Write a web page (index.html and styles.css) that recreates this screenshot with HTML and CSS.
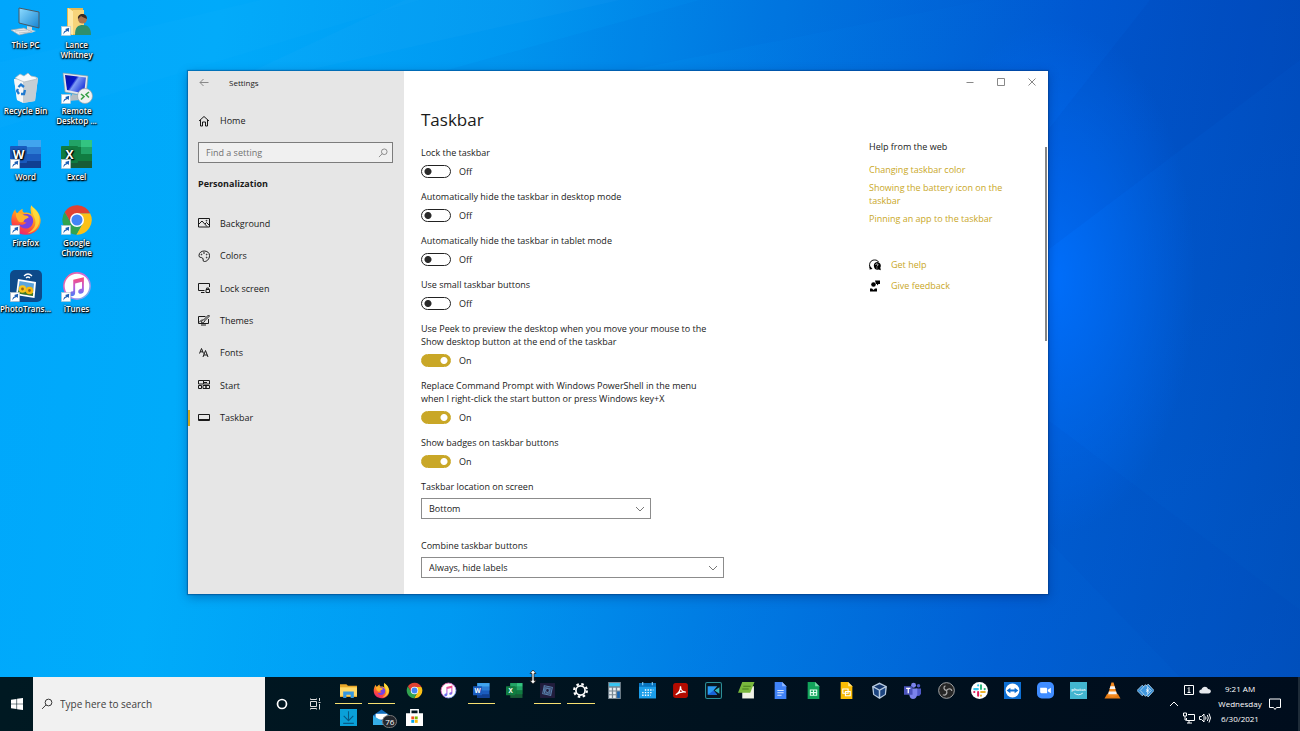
FILE: index.html
```html
<!DOCTYPE html>
<html lang="en">
<head>
<meta charset="utf-8">
<meta name="viewport" content="width=device-width, initial-scale=1">
<title>Settings - Taskbar</title>
<link rel="stylesheet" href="styles.css">
</head>
<body>
<svg class="defs" aria-hidden="true">
  <defs>
    <linearGradient id="g-screen" x1="0" y1="0" x2="1" y2="1"><stop offset="0" stop-color="#8fdcff"/><stop offset="1" stop-color="#1584d2"/></linearGradient>
    <linearGradient id="g-rdp" x1="0" y1="0" x2="1" y2="0.6"><stop offset="0" stop-color="#0a12a0"/><stop offset="0.45" stop-color="#0716c8"/><stop offset="0.55" stop-color="#7f9cf5"/><stop offset="1" stop-color="#1a34d8"/></linearGradient>
    <linearGradient id="g-fox" x1="0.8" y1="0" x2="0.3" y2="1"><stop offset="0" stop-color="#ffe23a"/><stop offset="0.45" stop-color="#ff9a1f"/><stop offset="0.75" stop-color="#ff4a3c"/><stop offset="1" stop-color="#e8227a"/></linearGradient>
    <linearGradient id="g-note" x1="0" y1="0" x2="0" y2="1"><stop offset="0" stop-color="#ff4a6e"/><stop offset="0.5" stop-color="#c25ad8"/><stop offset="1" stop-color="#4a7cf5"/></linearGradient>
    <linearGradient id="g-ring" x1="0" y1="0" x2="1" y2="1"><stop offset="0" stop-color="#ff5f87"/><stop offset="0.5" stop-color="#c86be8"/><stop offset="1" stop-color="#5cc4f5"/></linearGradient>
    <symbol id="arrow" viewBox="0 0 10 10"><rect x="0.5" y="0.5" width="9" height="9" fill="#fff" stroke="#b8c4cc" stroke-width="0.6"/><path d="M2.500 8.500C2.300 6 3.400 4.700 5.200 4.300L4.200 3 8.200 1.700 7.800 6 6.600 5.100C4.800 5.600 3.600 6.400 2.500 8.500z" fill="#1c5fb4"/></symbol>
    <symbol id="word" viewBox="0 0 32 32"><path d="M8 2h23v28H8z" fill="#1b5cbe"/><path d="M8 2h23v7H8z" fill="#41a5ee"/><path d="M8 9h23v7H8z" fill="#2b7cd3"/><path d="M8 23h23v7H8z" fill="#103f91"/><rect x="0" y="8" width="17" height="17" rx="1" fill="#185abd"/><text x="8.500" y="21" text-anchor="middle" class="app-letter">W</text></symbol>
    <symbol id="excel" viewBox="0 0 32 32"><path d="M8 2h23v28H8z" fill="#185c37"/><path d="M8 2h12v7H8z" fill="#21a366"/><path d="M20 2h11v7H20z" fill="#33c481"/><path d="M8 9h12v14H8z" fill="#107c41"/><path d="M20 9h11v7H20z" fill="#21a366"/><path d="M20 16h11v7H20z" fill="#107c41"/><rect x="0" y="8" width="17" height="17" rx="1" fill="#107c41"/><text x="8.500" y="21" text-anchor="middle" class="app-letter">X</text></symbol>
    <symbol id="firefox" viewBox="0 0 48 48"><path d="M24 46C11 46 2 37 2 25 2 18 4 13 8 8c0 3 1 5 3 6 2-3 4-5 8-7-1 3 0 5 3 6 4-1 8 0 10 3-1-6-2-10 0-14 3 5 13 9 14 22 0 13-9 22-22 22z" fill="url(#g-fox)"/><path d="M14 20c3-5 11-7 17-3 5 4 5 13 0 17-6 5-15 3-18-4 4 2 8 1 12-2-6 0-6-5-11-8z" fill="#7542e5"/><path d="M9 14c3-1 8-1 12 3 3 0 7 1 7 3-1 2-6 2-7 5-2 3-7 3-9 0-2-4-4-7-3-11z" fill="#ffb32a"/><path d="M34 5c8 6 11 14 10 22-2 10-9 16-18 17 9-5 13-11 12-19-1-6-6-11-4-20z" fill="#ffe43f" opacity="0.75"/></symbol>
    <symbol id="chrome" viewBox="0 0 48 48"><path d="M24 14H43.600A22 22 0 0 1 22.860 45.970L32.660 29z" fill="#fbc116"/><path d="M32.660 29L22.860 45.970A22 22 0 0 1 5.540 12.030L15.340 29z" fill="#31a350"/><path d="M15.340 29L5.540 12.030A22 22 0 0 1 43.600 14H24z" fill="#df4232"/><circle cx="24" cy="24" r="10.500" fill="#fff"/><circle cx="24" cy="24" r="8.300" fill="#4285f4"/></symbol>
    <symbol id="itunes" viewBox="0 0 48 48"><circle cx="24" cy="24" r="21" fill="#fff" stroke="url(#g-ring)" stroke-width="2.500"/><path d="M18 14l17-4v21c0 6-9 7-9 2 0-4 4-4 6-5V17l-11 3v15c0 6-9 7-9 2 0-4 4-4 6-5z" fill="url(#g-note)"/></symbol>
    <symbol id="lens" viewBox="0 0 16 16"><g fill="none" stroke="currentColor" stroke-width="1.300"><circle cx="10" cy="6" r="4.500"/><path d="M6.700 9.200L1.500 14.500"/></g></symbol>
  </defs>
</svg>

<div class="screen">
  <main class="desktop">
    <svg class="beams" viewBox="0 0 1300 677" preserveAspectRatio="none" aria-hidden="true">
      <path d="M250 72L405 0H620L300 72z" fill="#5fc8ff" opacity="0.05"/>
      <path d="M0 62L260 0H420L0 128z" fill="#30b8ff" opacity="0.06"/>
      <path d="M620 72L985 0H700L440 72z" fill="#0052d0" opacity="0.06"/>
      <path d="M1048 250L1300 60V0H1150L1048 130z" fill="#002c90" opacity="0.05"/>
      <path d="M1048 420L1300 610V677H1180L1048 540z" fill="#0038a8" opacity="0.05"/>
    </svg>

    <nav class="shortcuts" aria-label="Desktop">
      <a class="shortcut" href="#"><svg viewBox="0 0 32 32"><path d="M9 2l20 4v16L9 17z" fill="url(#g-screen)" stroke="#4a5964" stroke-width="1"/><path d="M17 20l5 1v3l4 1-5 2-8-2 4-1z" fill="#cfd6da"/><path d="M1 24l13-2 8 4-13 3z" fill="#e7eaec" stroke="#98a4ac" stroke-width="0.700"/><path d="M5 25l12-1M9 27l10-1" stroke="#a9b4bb" stroke-width="0.700"/></svg><span>This PC</span></a>
      <a class="shortcut" href="#"><svg viewBox="0 0 32 32"><path d="M6 2h16v27H6z" fill="#e6b84e"/><path d="M7 2l5 3v24l-5-2z" fill="#ffe9a6"/><path d="M12 4h11v24H12z" fill="#f7d47a"/><circle cx="21.500" cy="13" r="4.500" fill="#a9744e"/><path d="M17 13c-1-6 9-7 9 0-2-1-5-2-6-3-1 1-2 2-3 3z" fill="#3a2c24"/><path d="M14 29c0-8 3-10 8-10s8 3 8 10z" fill="#2f8f6b"/><use href="#arrow" x="0" y="20" width="10" height="10"/></svg><span>Lance Whitney</span></a>
      <a class="shortcut" href="#"><svg viewBox="0 0 32 32"><path d="M4 7l22-2 2 1-3 23-12 2-6-3z" fill="#dbe1e5"/><path d="M4 7l9 2 1 22-7-3z" fill="#f5f7f8"/><path d="M13 9l15-3-3 23-12 2z" fill="#c6ced4"/><path d="M5 6l5-4 4 2 4-3 3 3 5 1 1 2-13 3z" fill="#f8fafb" stroke="#aab5bc" stroke-width="0.700"/><g fill="none" stroke="#1f7ad0" stroke-width="2.300"><path d="M8.500 15l2.500-2.500 3 2.500M15 18l-1 4h-3M9 22l-2-3 1-2"/></g></svg><span>Recycle Bin</span></a>
      <a class="shortcut" href="#"><svg viewBox="0 0 32 32"><path d="M2 1l25 3-2 20-21-4z" fill="#e4e8eb" stroke="#8b979f" stroke-width="0.600"/><path d="M4 3l21 2.500-2 16L6 18z" fill="url(#g-rdp)"/><path d="M11 22l7 1 1 5-11 1z" fill="#b4bdc4"/><circle cx="24" cy="24" r="7.500" fill="#f1f2f2" stroke="#9aa2a7" stroke-width="0.700"/><path d="M20 22l3 2.500-3 3M28 20l-3 2.500 3 3" fill="none" stroke="#3aa14a" stroke-width="1.600"/><use href="#arrow" x="0" y="22" width="10" height="10"/></svg><span>Remote Desktop ...</span></a>
      <a class="shortcut" href="#"><svg viewBox="0 0 32 32"><use href="#word" width="32" height="32"/><use href="#arrow" x="0" y="21" width="10" height="10"/></svg><span>Word</span></a>
      <a class="shortcut" href="#"><svg viewBox="0 0 32 32"><use href="#excel" width="32" height="32"/><use href="#arrow" x="0" y="21" width="10" height="10"/></svg><span>Excel</span></a>
      <a class="shortcut" href="#"><svg viewBox="0 0 32 32"><use href="#firefox" width="32" height="32"/><use href="#arrow" x="0" y="21" width="10" height="10"/></svg><span>Firefox</span></a>
      <a class="shortcut" href="#"><svg viewBox="0 0 32 32"><use href="#chrome" width="32" height="32"/><use href="#arrow" x="0" y="21" width="10" height="10"/></svg><span>Google Chrome</span></a>
      <a class="shortcut" href="#"><svg viewBox="0 0 32 32"><rect width="32" height="32" rx="5" fill="#0d4a8a"/><path d="M14 6q4-4 8 0M16 8q2-2 4 0" fill="none" stroke="#fff" stroke-width="1.300"/><path d="M8 9l18 3-1.500 16L6 25z" fill="#fff"/><path d="M9.500 11l14.500 2.500-1.200 12.500L7.800 23.500z" fill="#5aa4dc"/><path d="M8.200 20.500l15 2.500-.3 3-15-2.500z" fill="#3f7a25"/><circle cx="12.500" cy="19" r="3.800" fill="#f8c51c"/><circle cx="19.500" cy="20.500" r="3.800" fill="#f5b90f"/><circle cx="12.500" cy="19" r="1.400" fill="#9a6414"/><circle cx="19.500" cy="20.500" r="1.400" fill="#9a6414"/><use href="#arrow" x="0" y="22" width="10" height="10"/></svg><span>PhotoTrans...</span></a>
      <a class="shortcut" href="#"><svg viewBox="0 0 32 32"><use href="#itunes" x="1" width="30" height="32"/><use href="#arrow" x="0" y="22" width="10" height="10"/></svg><span>iTunes</span></a>
    </nav>

    <section class="window" aria-label="Settings">
      <aside class="sidebar">
        <header class="titlebar">
          <button class="icon-button" aria-label="Back"><svg class="glyph" viewBox="0 0 12 12"><path d="M10.500 5.500H2M5.500 2L2 5.500 5.500 9"/></svg></button>
          <span>Settings</span>
        </header>
        <a class="nav-item home" href="#"><svg class="glyph" viewBox="0 0 12 12"><path d="M1 6l5-4.500L11 6M2.500 5v6h2V7h3v4h2V5"/></svg>Home</a>
        <form class="find">
          <input type="search" placeholder="Find a setting" aria-label="Find a setting">
          <svg class="find-lens"><use href="#lens"/></svg>
        </form>
        <h2>Personalization</h2>
        <nav class="nav" aria-label="Personalization">
          <a class="nav-item" href="#"><svg class="glyph" viewBox="0 0 12 12"><path d="M.5 1.500h11v8.500H.5zM1 7l3-3 5 5.500M7 7l1.500-1.500 3 3"/><circle cx="8.500" cy="3.700" r=".4"/></svg>Background</a>
          <a class="nav-item" href="#"><svg class="glyph" viewBox="0 0 12 12"><path d="M1 5.500c0-6 10.500-6 10.500 0 0 4-3 6-5 6-2.500 0-.5-2.500-2-3.500C3 7 1 8 1 5.500z"/><circle cx="3.500" cy="4.500" r=".4"/><circle cx="6" cy="3" r=".4"/><circle cx="8.700" cy="4.500" r=".4"/><circle cx="8.700" cy="7.500" r=".4"/></svg>Colors</a>
          <a class="nav-item" href="#"><svg class="glyph" viewBox="0 0 12 12"><path d="M6.500 8.500H.5v-7h11v3.500M3 10.500h3.500M8 7.500h3.500v3H8zM8.700 7.500V6h2v1.500"/></svg>Lock screen</a>
          <a class="nav-item" href="#"><svg class="glyph" viewBox="0 0 12 12"><path d="M7.500 2.500H.5v7h10V5M3.500 8.500c0-2 1-2.500 2-2.500L10.500 1l1 1-5 5C6.500 8.500 5 9 3.500 8.500zM3 11h5M1 8.500l3-3"/></svg>Themes</a>
          <a class="nav-item" href="#"><svg class="glyph" viewBox="0 0 12 12"><path d="M1.500 6.500l2-5 2 5M2.200 4.800h2.600M5 10l2.500-6.500L10 10M5.800 8h3.400"/></svg>Fonts</a>
          <a class="nav-item" href="#"><svg class="glyph" viewBox="0 0 12 12"><path d="M.5 1.500h5v3.500h-5zM5.500 1.500h6V5h-6zM.5 6.500h3v3h-3zM5 6.500h3v3H5zM8 6.500h3.500v3H8zM5 3.500h4"/></svg>Start</a>
          <a class="nav-item current" href="#" aria-current="page"><svg class="glyph" viewBox="0 0 12 12"><path d="M.5 2.500h11v6H.5zM.5 7.500h11"/></svg>Taskbar</a>
        </nav>
      </aside>

      <div class="content">
        <div class="window-controls">
          <button class="icon-button" aria-label="Minimize"><svg class="glyph" viewBox="0 0 8 8"><path d="M.5 4.500h7"/></svg></button>
          <button class="icon-button" aria-label="Maximize"><svg class="glyph" viewBox="0 0 8 8"><path d="M.5.500h7v7h-7z"/></svg></button>
          <button class="icon-button" aria-label="Close"><svg class="glyph" viewBox="0 0 8 8"><path d="M.5.500l7 7M7.500.500l-7 7"/></svg></button>
        </div>
        <div class="page">
          <form class="settings">
            <h1>Taskbar</h1>
            <div class="setting"><label for="lock">Lock the taskbar</label><div class="switch"><input type="checkbox" role="switch" id="lock"><span>Off</span></div></div>
            <div class="setting"><label for="hide-d">Automatically hide the taskbar in desktop mode</label><div class="switch"><input type="checkbox" role="switch" id="hide-d"><span>Off</span></div></div>
            <div class="setting"><label for="hide-t">Automatically hide the taskbar in tablet mode</label><div class="switch"><input type="checkbox" role="switch" id="hide-t"><span>Off</span></div></div>
            <div class="setting"><label for="small">Use small taskbar buttons</label><div class="switch"><input type="checkbox" role="switch" id="small"><span>Off</span></div></div>
            <div class="setting"><label for="peek">Use Peek to preview the desktop when you move your mouse to the Show desktop button at the end of the taskbar</label><div class="switch"><input type="checkbox" role="switch" id="peek" checked><span>On</span></div></div>
            <div class="setting"><label for="shell">Replace Command Prompt with Windows PowerShell in the menu when I right-click the start button or press Windows key+X</label><div class="switch"><input type="checkbox" role="switch" id="shell" checked><span>On</span></div></div>
            <div class="setting"><label for="badges">Show badges on taskbar buttons</label><div class="switch"><input type="checkbox" role="switch" id="badges" checked><span>On</span></div></div>
            <div class="setting choice"><label for="location">Taskbar location on screen</label><div class="select short"><select id="location"><option>Bottom</option></select><svg class="glyph" viewBox="0 0 10 10"><path d="M1 3l4 4 4-4"/></svg></div></div>
            <div class="setting choice"><label for="combine">Combine taskbar buttons</label><div class="select"><select id="combine"><option>Always, hide labels</option></select><svg class="glyph" viewBox="0 0 10 10"><path d="M1 3l4 4 4-4"/></svg></div></div>
          </form>
          <aside class="help">
            <h3>Help from the web</h3>
            <a href="#">Changing taskbar color</a>
            <a href="#">Showing the battery icon on the taskbar</a>
            <a href="#">Pinning an app to the taskbar</a>
            <div class="support">
              <a href="#"><svg viewBox="0 0 12 12"><path d="M1 9C-.5 4 2 1 5.500 1c2 0 3 .5 4 2" fill="none" stroke="#000"/><path d="M.5 10.500L1 7l2.500 3z"/><path d="M8 3a3.700 3.700 0 0 1 3.300 5.500l.5 2.700-2.300-.6A3.800 3.800 0 1 1 8 3z"/><path d="M6.700 6c0-1.700 2.500-1.500 2.300 0-.1.700-1 .8-1.100 1.500M7.900 8.500v1" stroke="#fff" fill="none" stroke-width=".8"/></svg>Get help</a>
              <a href="#"><svg viewBox="0 0 12 12"><circle cx="4.500" cy="4.500" r="2.300"/><path d="M1 11.500V8.500h2l1.500 1.500L6 8.500h2v3zM6 .5h5V4H9.500L8 5.500V4H7z"/></svg>Give feedback</a>
            </div>
          </aside>
          <div class="scroll-track"><div class="scroll-thumb"></div></div>
        </div>
      </div>
    </section>
    <svg class="cursor" viewBox="0 0 8 16" aria-hidden="true"><path d="M4 1L1 4.500h2v7H1L4 15l3-3.500H5v-7h2z" fill="#fff" stroke="#222" stroke-width=".8"/></svg>
  </main>

  <footer class="taskbar">
    <button class="start" aria-label="Start"><svg viewBox="0 0 12 12"><path d="M0 1.700l5.500-.8v4.800H0zM6.100.8L12 0v5.700H6.100zM0 6.300h5.500v4.800L0 10.300zM6.100 6.300H12V12l-5.900-.8z" fill="#fff"/></svg></button>
    <label class="search"><svg><use href="#lens"/></svg><input type="text" placeholder="Type here to search" aria-label="Type here to search"></label>
    <button class="tool" aria-label="Cortana"><svg viewBox="0 0 12 12"><circle cx="6" cy="6" r="4.500" fill="none" stroke="#fff" stroke-width="1.700"/></svg></button>
    <button class="tool" aria-label="Task View"><svg class="glyph" viewBox="0 0 12 12"><path d="M1.500 3.500h6v5h-6zM1.500.500V1.500h6V.500M1.500 11.500v-1h6v1M10.500 0v3M10.500 6v5.500M9.500 4.500h2"/></svg></button>
    <nav class="apps" aria-label="Open apps">
      <a href="#" class="open" aria-label="File Explorer"><svg viewBox="0 0 16 16"><path d="M0 2h6l1.500 1.500H16V14H0z" fill="#e9a829"/><path d="M0 5h16v8H0z" fill="#ffd968"/><path d="M3 9h10v6h-3v-3H6v3H3z" fill="#3597e0"/></svg></a>
      <a href="#" class="open" aria-label="Firefox"><svg><use href="#firefox"/></svg></a>
      <a href="#" aria-label="Chrome"><svg><use href="#chrome"/></svg></a>
      <a href="#" aria-label="iTunes"><svg><use href="#itunes"/></svg></a>
      <a href="#" class="open" aria-label="Word"><svg><use href="#word"/></svg></a>
      <a href="#" aria-label="Excel"><svg><use href="#excel"/></svg></a>
      <a href="#" class="open" aria-label="Photoshop Elements"><svg viewBox="0 0 16 16"><rect x="1" y="1" width="14" height="14" fill="#211c3c"/><g fill="none" stroke="#5a82ae" stroke-width="1"><path d="M5 3.500l7.500 1.500-1.500 7.500L3.500 11z"/><path d="M5.500 5.500l5 .3-.3 4.800-5-.3z"/><circle cx="8" cy="8" r="1.800"/></g></svg></a>
      <a href="#" class="open" aria-label="Settings"><svg viewBox="0 0 16 16"><circle cx="8" cy="8" r="6" fill="none" stroke="#fff" stroke-width="2" stroke-dasharray="2.360 2.360"/><circle cx="8" cy="8" r="4.300" fill="none" stroke="#fff" stroke-width="1.600"/></svg></a>
      <a href="#" aria-label="Calculator"><svg viewBox="0 0 16 16"><path d="M2 0h12v16H2z" fill="#778793"/><path d="M3 1h10v3H3z" fill="#39c6f2"/><path d="M3 5.500h2.500V8H3zM6.700 5.500h2.500V8H6.700zM10.500 5.500H13V8h-2.500zM3 9h2.500v2.500H3zM6.700 9h2.500v2.500H6.700zM3 12.500h2.500V15H3zM6.700 12.500h2.500V15H6.700z" fill="#e9eef2"/><path d="M10.500 9H13v6h-2.500z" fill="#1565b5"/></svg></a>
      <a href="#" aria-label="Calendar"><svg viewBox="0 0 16 16"><path d="M0 1h16v14.500H0z" fill="#1b9eea"/><path d="M0 1h16v3.500H0z" fill="#0873bd"/><path d="M3.500 0v3M12.500 0v3" stroke="#8dd5ff"/><path d="M5.500 7.500h8M3 10h10M3 12.500h8" stroke="#fff" stroke-width="1.300" stroke-dasharray="1.300 1.200"/></svg></a>
      <a href="#" aria-label="Acrobat"><svg viewBox="0 0 16 16"><rect x="1" y="1" width="14" height="14" rx="2.500" fill="#b30b00"/><path d="M3.500 12c3-1.500 4.500-5 4.500-8M8 4c0 3 2 5.500 5 5.500-4-.5-7 .5-9.500 2.500" fill="none" stroke="#fff" stroke-width="1.200"/></svg></a>
      <a href="#" aria-label="Filmora"><svg viewBox="0 0 16 16"><rect x=".5" y=".5" width="15" height="15" rx="1.500" fill="#07151e" stroke="#2c8f98"/><path d="M2.500 4h9L8 8l3.500 4h-9z" fill="#2a9bf2"/><path d="M2.500 12L8 8l3.500 4z" fill="#1762d8"/><path d="M9 8l4.500-3v6z" fill="#36b8b8"/></svg></a>
      <a href="#" aria-label="LiteManager"><svg viewBox="0 0 16 16"><path d="M4 4h11v11.500H4z" fill="#f1f2e6"/><path d="M4 0h11.500l-4 10H0z" fill="#79b83d"/><path d="M5 4h7M4 6.500h6" stroke="#457d1c"/></svg></a>
      <a href="#" aria-label="Docs"><svg viewBox="0 0 16 16"><path d="M2.500 0h7l4 4v12h-11z" fill="#3f82f7"/><path d="M9.500 0l4 4h-4z" fill="#91b8ff"/><path d="M5 8h6M5 10.200h6M5 12.400h4" stroke="#dbe8ff"/></svg></a>
      <a href="#" aria-label="Sheets"><svg viewBox="0 0 16 16"><path d="M2.500 0h7l4 4v12h-11z" fill="#12a35b"/><path d="M9.500 0l4 4h-4z" fill="#7ad8a8"/><path d="M5 7.500h6v5H5zM5 10h6M8 7.500v5" stroke="#e0ffee" fill="none"/></svg></a>
      <a href="#" aria-label="Slides"><svg viewBox="0 0 16 16"><path d="M2.500 0h7l4 4v12h-11z" fill="#fbbc04"/><path d="M9.500 0l4 4h-4z" fill="#ffe38a"/><path d="M4.500 6.500h5v4h-5zM7 9h4.500v4H7z" stroke="#fff" fill="#f4b400"/></svg></a>
      <a href="#" aria-label="VirtualBox"><svg viewBox="0 0 16 16"><path d="M8 .5L15 4l-1 8-6 4-6-4-1-8z" fill="#b8cbe0"/><path d="M8 2l5 2.200L8 7 3 4.200z" fill="#14366b"/><path d="M2.500 5.500L7.300 8v6L3 11.500zM13.500 5.500L8.700 8v6l4.300-2.500z" fill="#1c447f"/></svg></a>
      <a href="#" aria-label="Teams"><svg viewBox="0 0 16 16"><circle cx="9" cy="3" r="2.300" fill="#7b83eb"/><circle cx="13.700" cy="3.500" r="1.600" fill="#5059c9"/><path d="M11 6h5v5q-1 3-4 2z" fill="#5059c9"/><path d="M5 6h7.500v6q-1 4-4 4T5 12z" fill="#7b83eb"/><rect y="4" width="8" height="8" fill="#4b53bc"/><path d="M2 6h4M4 6v4.500" stroke="#fff" stroke-width="1.200"/></svg></a>
      <a href="#" aria-label="OBS"><svg viewBox="0 0 16 16"><circle cx="8" cy="8" r="7.400" fill="#262626" stroke="#bbb" stroke-width=".8"/><path d="M8 8C5 7.500 5 4.500 7 3.500M8 8c2-2.500 5-1.500 5 .5M8 8c1.200 3-1 5-3.500 4" fill="none" stroke="#aaa" stroke-width="1.200"/></svg></a>
      <a href="#" aria-label="Slack"><svg viewBox="0 0 16 16"><circle cx="8" cy="8" r="8" fill="#fff"/><g fill="none" stroke-width="1.900" stroke-linecap="round"><path d="M6.700 3v.2M3 6.700h3.500" stroke="#36c5f0"/><path d="M9.400 3v3.500M12.800 6.700h.2" stroke="#2eb67d"/><path d="M9.500 9.400H13M9.400 12.800v.2" stroke="#ecb22e"/><path d="M6.700 9.500V13M3 9.400h.2" stroke="#e01e5a"/></g></svg></a>
      <a href="#" aria-label="TeamViewer"><svg viewBox="0 0 16 16"><path d="M0 0h16v16H0z" fill="#0d6fd3"/><circle cx="8" cy="8" r="6.500" fill="#fff"/><path d="M2.500 8L6 5.500V7h4V5.500L13.500 8 10 10.500V9H6v1.500z" fill="#0d6fd3"/></svg></a>
      <a href="#" aria-label="Zoom"><svg viewBox="0 0 16 16"><rect width="16" height="15.500" rx="4.500" fill="#3f8cff"/><path d="M3 5.500h5.500q1 0 1 1v4H4q-1 0-1-1zM10.200 7.200L13 5.500v5l-2.800-1.700z" fill="#fff"/></svg></a>
      <a href="#" aria-label="Amazon Photos"><svg viewBox="0 0 16 16"><path d="M0 0h16v16H0z" fill="#42b5cf"/><text x="8" y="8.500" text-anchor="middle" class="photos">photos</text><path d="M4 10.500q4 3 8 0" fill="none" stroke="#fff" stroke-width=".8"/></svg></a>
      <a href="#" aria-label="VLC"><svg viewBox="0 0 16 16"><path d="M3 11h10l2.500 4.500H.5z" fill="#e57b13"/><path d="M7 .5h2L12.500 13q-4.500 2-9 0z" fill="#f58a1f"/><path d="M6 4h4l.8 2.700H5.200zM4.500 9h7l.6 2.500H3.900z" fill="#f4f4f4"/></svg></a>
      <a href="#" aria-label="Remote tool"><svg viewBox="0 0 16 16"><path d="M0 8l5-5 5 5-5 5zM5 8l5.500-6L16 8l-5.500 6z" fill="#2f8ad5" stroke="#b6d9f2" stroke-width=".8"/><path d="M3 8l5-5.500L13.500 8 8 13.500z" fill="#3f97de" stroke="#c0ddf2" stroke-width=".8"/><path d="M10 5v6M8.500 7l3 2M11.500 7l-3 2" stroke="#fff" stroke-width=".7"/></svg></a>
      <a href="#" aria-label="Downloader"><svg viewBox="0 0 16 16"><path d="M0 0h16v16H0z" fill="#0aa0d8"/><path d="M8 2v8.500M3.500 6.500L8 11l4.500-4.500M3 13.500h10" fill="none" stroke="#075a86"/></svg></a>
      <a href="#" aria-label="Mail, 76 unread"><svg viewBox="0 0 16 16"><path d="M0 6l8-5.500L16 6v9H0z" fill="#0f6cbd"/><path d="M2.500 4.500h11V10h-11z" fill="#fff"/><path d="M0 6l8 5 8-5v9H0z" fill="#35aee8"/></svg><span class="badge">76</span></a>
      <a href="#" aria-label="Store"><svg viewBox="0 0 16 16"><path d="M0 4h16v12H0z" fill="#fff"/><path d="M4.500 5V.700h7V5" fill="none" stroke="#fff" stroke-width="1.300"/><path d="M5 7h2.700v2.700H5z" fill="#f25022"/><path d="M8.300 7H11v2.700H8.300z" fill="#7fba00"/><path d="M5 10.300h2.700V13H5z" fill="#00a4ef"/><path d="M8.300 10.300H11V13H8.300z" fill="#ffb900"/></svg></a>
    </nav>
    <div class="tray">
      <button class="icon-button" aria-label="Show hidden icons"><svg class="glyph" viewBox="0 0 8 8"><path d="M0 6l4-4 4 4"/></svg></button>
      <div class="status">
        <svg class="glyph" viewBox="0 0 12 12"><path d="M1.500 1.500h9v9h-9zM5 4.500l1-1v5M4.500 8.500h3"/></svg>
        <svg viewBox="0 0 12 12"><path d="M2.500 9.500c-3 0-3-4 0-4C3.500 2 8 2 9 5c4 0 3.500 4.500.5 4.500z" fill="#e6e9ed"/></svg>
        <svg class="glyph" viewBox="0 0 12 12"><path d="M5 2.500h6.500v6H3.500V6M6 8.500v2.500M4 11h5M.5 1h3v3h-3zM2 4v4h1.500"/></svg>
        <svg class="glyph" viewBox="0 0 12 12"><path d="M.5 4.500h2L5 2v8L2.500 7.500h-2zM6.500 4.500q1 1.500 0 3M8.300 3q2 3 0 6M10 1.500q3 4.500 0 9"/></svg>
      </div>
      <time class="clock" datetime="2021-06-30T09:21"><span>9:21 AM</span><span>Wednesday</span><span>6/30/2021</span></time>
      <button class="icon-button" aria-label="Notifications"><svg class="glyph note" viewBox="0 0 12 12"><path d="M.5 1h11v8.500h-4l-1.500 2-1.500-2h-4z"/></svg></button>
    </div>
  </footer>
</div>
</body>
</html>
```

FILE: styles.css
```css
* { box-sizing: border-box; }

body {
  margin: 0;
  font-family: "Open Sans", "Noto Sans", sans-serif;
  font-size: 9px;
  line-height: 13px;
  color: #1a1a1a;
}

button, input, select { font: inherit; color: inherit; }
button { border: 0; padding: 0; background: none; }
a { text-decoration: none; color: inherit; }
h1, h2, h3 { margin: 0; font-weight: 400; }

.defs { position: absolute; width: 0; height: 0; }
.app-letter { font-family: "Open Sans", sans-serif; font-size: 12px; font-weight: 700; fill: #fff; }
.photos { font-family: "Open Sans", sans-serif; font-size: 4px; font-weight: 600; fill: #fff; }
.glyph { fill: none; stroke: currentColor; stroke-width: 1; }

.screen {
  display: grid;
  grid-template-rows: 1fr 54px;
  min-height: 100vh;
}

/* Desktop */
.desktop {
  position: relative;
  padding-top: 6px;
  background:
    radial-gradient(ellipse 11% 38% at 81% 41%, rgba(0, 112, 255, 0.9), rgba(0, 104, 255, 0) 100%),
    linear-gradient(172deg, rgba(0, 60, 180, 0), rgba(0, 190, 255, 0.1)),
    linear-gradient(97deg, #00a6fc 0%, #00aafa 16%, #0096f0 38%, #0074e0 58%, #0056d0 78%, #0045b6 100%);
}
.beams { position: absolute; inset: 0; width: 100%; height: 100%; }

.shortcuts {
  position: relative;
  display: inline-grid;
  grid-template-columns: 51px 51px;
  grid-auto-rows: 66px;
}
.shortcut {
  display: flex;
  flex-direction: column;
  align-items: center;
  gap: 2px;
  font-size: 8px;
  line-height: 10px;
  font-weight: 600;
  text-align: center;
  color: #fff;
  text-shadow: 0 0 2px #000, 1px 1px 1px #000, 0 1px 2px #000;
}
.shortcut svg { width: 32px; height: 32px; }

/* Settings window */
.window {
  position: absolute;
  top: 71px;
  left: 188px;
  right: 252px;
  bottom: 83px;
  display: grid;
  grid-template-columns: 216px 1fr;
  background: #fff;
  box-shadow: 0 0 1px 1px rgba(0, 50, 110, 0.4), 0 3px 10px rgba(0, 20, 80, 0.35);
}
.sidebar { background: #e6e6e6; }
.titlebar {
  display: flex;
  align-items: center;
  gap: 19px;
  height: 23px;
  padding-left: 10px;
  font-size: 8px;
}
.icon-button { display: grid; place-items: center; color: #888; }
.titlebar .icon-button svg { width: 12px; height: 12px; }

.nav-item {
  display: flex;
  align-items: center;
  gap: 10px;
  padding-left: 10px;
}
.nav-item svg { width: 12px; height: 12px; }
.home { margin: 10px 0 5px; height: 33px; }
.current { box-shadow: inset 2px 0 #d0a41c; }
.nav { display: grid; grid-auto-rows: 1fr; height: 227px; margin-top: 16px; }
.nav .nav-item { height: 16px; align-self: center; }

.find { position: relative; margin: 0 11px 0 10px; }
.find input {
  display: block;
  width: 100%;
  height: 21px;
  padding: 0 24px 0 7px;
  border: 1px solid #7c7c7c;
  border-radius: 0;
  background: #f0f0f0;
  appearance: none;
  outline: 0;
}
.find input::placeholder { color: #707070; opacity: 1; }
.find-lens { position: absolute; right: 5px; top: 6px; width: 10px; height: 10px; color: #777; }
.sidebar h2 { margin: 14px 0 0 10px; font-size: 9px; line-height: 14px; font-weight: 700; }

.content { display: flex; flex-direction: column; min-width: 0; }
.window-controls { display: flex; justify-content: flex-end; gap: 7px; height: 22px; margin-bottom: 1px; padding-right: 4px; }
.window-controls .icon-button { width: 24px; }
.window-controls svg { width: 8px; height: 8px; }

.page { display: grid; grid-template-columns: 448px 1fr 3px; flex: 1; }
.settings { display: flex; flex-direction: column; gap: 12px; padding: 12px 0 0 17px; }
h1 { height: 28px; font-size: 17px; line-height: 28px; }
.setting { display: flex; flex-direction: column; gap: 6px; }
.setting label { max-width: 300px; }
.switch { display: flex; align-items: center; gap: 8px; height: 13px; }
.switch input {
  width: 30px;
  height: 13px;
  margin: 0;
  appearance: none;
  border: 1px solid #222;
  border-radius: 7px;
  background: radial-gradient(circle at 6px 50%, #2a2a2a 3px, transparent 4px);
}
.switch input:checked {
  border-color: #c9a727;
  background: radial-gradient(circle at 22px 50%, #fff 3px, #c9a727 4px);
}
.choice { gap: 5px; }
.choice + .choice { margin-top: 8px; }
.select { position: relative; width: 303px; }
.select.short { width: 230px; }
.select select {
  display: block;
  width: 100%;
  height: 21px;
  padding: 0 7px;
  appearance: none;
  border: 1px solid #8c8c8c;
  border-radius: 0;
  background: #fff;
}
.select svg { position: absolute; right: 6px; top: 6px; width: 10px; height: 10px; color: #777; }

.help { display: flex; flex-direction: column; gap: 5px; max-width: 165px; padding: 46px 0 0 17px; }
.help h3 { margin-bottom: 5px; font-size: 9px; }
.help a { color: #c9a727; }
.support { display: flex; flex-direction: column; gap: 8px; margin-top: 28px; }
.support a { display: flex; align-items: center; gap: 10px; }
.support svg { width: 12px; height: 12px; }
.scroll-track { padding-top: 53px; }
.scroll-thumb { width: 2px; height: 194px; background: #858585; }

.cursor { position: absolute; left: 41%; bottom: -8px; z-index: 1; width: 8px; height: 16px; margin-left: -4px; }

/* Taskbar */
.taskbar {
  display: flex;
  background: linear-gradient(90deg, #001922, #00121f 55%, #000d1d);
  color: #fff;
}
.start { display: grid; place-items: center; width: 33px; }
.start svg { width: 12px; height: 12px; }
.search {
  display: flex;
  align-items: center;
  gap: 7px;
  width: 232px;
  padding-left: 8px;
  background: #f1f1f1;
  color: #333;
}
.search svg { width: 12px; height: 12px; }
.search input { flex: 1; min-width: 0; padding: 0; border: 0; outline: 0; background: none; font-size: 10px; }
.search input::placeholder { color: #404040; opacity: 1; }
.tool { display: grid; place-items: center; width: 33px; color: #ddd; }
.tool svg { width: 12px; height: 12px; }

.apps { display: grid; flex: 1; grid-template-columns: repeat(25, 1fr); grid-template-rows: 27px 27px; margin-left: 1px; }
.apps a { position: relative; display: flex; justify-content: center; padding-top: 5px; margin: 0 3px; }
.apps svg { width: 17px; height: 17px; }
.apps .open { border-bottom: 1px solid #f7e070; }
.badge {
  position: absolute;
  left: 14px;
  top: 11px;
  padding: 0 2px;
  border: 1px solid #777;
  border-radius: 7px;
  background: #23272e;
  font-size: 8px;
  line-height: 11px;
}

.tray { display: flex; align-items: center; gap: 5px; width: 138px; padding-left: 8px; border-right: 2px solid #1e2b38; }
.tray .icon-button { color: #fff; }
.tray .icon-button svg { width: 8px; height: 8px; }
.tray .icon-button .note { width: 12px; height: 12px; }
.status { display: grid; grid-template-columns: 12px 12px; gap: 16px 4px; }
.status svg { width: 12px; height: 12px; }
.clock { display: flex; flex-direction: column; width: 48px; padding-bottom: 1px; font-size: 8px; line-height: 15px; text-align: center; }
```
